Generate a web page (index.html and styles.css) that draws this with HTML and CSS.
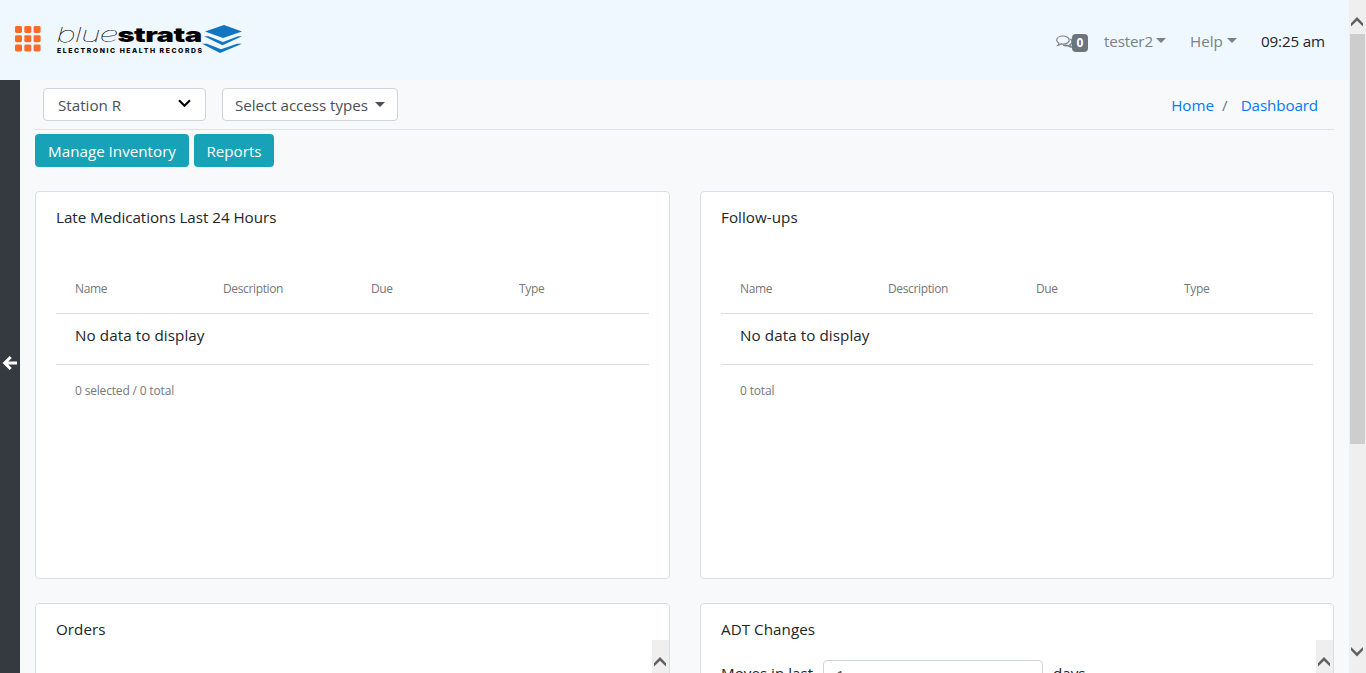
FILE: index.html
```
<!DOCTYPE html>
<html lang="en">
<head>
<meta charset="utf-8">
<title>Dashboard</title>
<link rel="stylesheet" href="styles.css">
</head>
<body>
<div class="app">
  <div class="page">
    <header class="navbar">
      <svg class="apps" width="27" height="27" viewBox="0 0 27 27" fill="#ff6b26">
        <rect x="0" y="0" width="7" height="7" rx="1.4"/><rect x="9.3" y="0" width="7" height="7" rx="1.4"/><rect x="18.6" y="0" width="7" height="7" rx="1.4"/>
        <rect x="0" y="9.2" width="7" height="7" rx="1.4"/><rect x="9.3" y="9.2" width="7" height="7" rx="1.4"/><rect x="18.6" y="9.2" width="7" height="7" rx="1.4"/>
        <rect x="0" y="18.4" width="7" height="7" rx="1.4"/><rect x="9.3" y="18.4" width="7" height="7" rx="1.4"/><rect x="18.6" y="18.4" width="7" height="7" rx="1.4"/>
      </svg>
      <svg class="logo" width="190" height="34" viewBox="0 0 190 34">
        <text class="logo-blue" x="0" y="20" textLength="61" lengthAdjust="spacingAndGlyphs">blue</text>
        <text class="logo-strata" x="61.500" y="20" textLength="84" lengthAdjust="spacingAndGlyphs">strata</text>
        <text class="logo-sub" x="1" y="30.800" textLength="145">ELECTRONIC HEALTH RECORDS</text>
        <g fill="#1176bf">
          <path d="M168 3 186 9.500 167 16 149 9.500Z"/>
          <path d="M148 14.300 152.500 14.300 167 20 182 14.300 186 14.300 166.500 23.300Z"/>
          <path d="M146 21.800 151 21.800 165 27.300 181 21.800 186 21.800 164 31Z"/>
        </g>
      </svg>
      <nav class="nav">
        <span class="messages">
          <svg width="17" height="14" viewBox="0 0 17 14" fill="none" stroke="#7b8188" stroke-width="1.2">
            <path d="M7 1C3.500 1 .7 2.700.7 5c0 1.400.9 2.500 2.300 3.200-.1.900-.6 1.600-1.200 2.200 1.400-.2 2.500-.7 3.300-1.500.6.1 1.200.2 1.900.2 3.500 0 6.200-1.800 6.200-4.100S10.500 1 7 1Z"/>
            <path stroke-width="1.600" d="M14.400 3.800c2.400 1.800 2.200 4.600-.4 6 .2.900.7 1.500 1.400 2.200-1.500-.1-2.700-.7-3.600-1.500-1.600.3-3.300.1-4.500-.5"/>
          </svg>
          <span class="badge">0</span>
        </span>
        <span class="link user">tester2<i class="caret"></i></span>
        <span class="link help">Help<i class="caret"></i></span>
        <span class="clock">09:25 am</span>
      </nav>
    </header>
    <div class="body">
      <aside class="sidebar">
        <svg width="16" height="16" viewBox="0 0 16 16" fill="none" stroke="#fff" stroke-width="3"><path d="M8.700 2 2.700 8 8.700 14M3.500 8H15"/></svg>
      </aside>
      <main class="content">
        <div class="toolbar">
          <div class="select station"><span>Station R</span>
            <svg width="13" height="9" viewBox="0 0 13 9" fill="none" stroke="#000" stroke-width="2.200"><path d="M1 1.300 6.500 6.800 12 1.300"/></svg>
          </div>
          <div class="select access"><span>Select access types</span><i class="caret"></i></div>
          <div class="crumbs"><a>Home</a><span class="slash">/</span><a class="current">Dashboard</a></div>
        </div>
        <div class="actions"><button class="btn manage">Manage Inventory</button><button class="btn reports">Reports</button></div>
        <div class="cards">
          <section class="card">
            <h2 class="late">Late Medications Last 24 Hours</h2>
            <div class="thead"><span>Name</span><span>Description</span><span>Due</span><span>Type</span></div>
            <div class="empty">No data to display</div>
            <div class="foot">0 selected / 0 total</div>
          </section>
          <section class="card">
            <h2>Follow-ups</h2>
            <div class="thead"><span>Name</span><span>Description</span><span>Due</span><span>Type</span></div>
            <div class="empty">No data to display</div>
            <div class="foot">0 total</div>
          </section>
          <section class="card">
            <h2>Orders</h2>
            <div class="inner-scroll"><svg width="12" height="10" viewBox="0 0 12 10"><path fill="#606060" d="M0 6.300 6 0 12 6.300V9.600L6 3.800 0 9.600Z"/></svg></div>
          </section>
          <section class="card">
            <h2>ADT Changes</h2>
            <div class="moves"><span class="moves-label">Moves in last</span><div class="days-input">1</div><span>days</span></div>
            <div class="inner-scroll"><svg width="12" height="10" viewBox="0 0 12 10"><path fill="#606060" d="M0 6.300 6 0 12 6.300V9.600L6 3.800 0 9.600Z"/></svg></div>
          </section>
        </div>
      </main>
    </div>
  </div>
  <div class="scrollbar">
    <svg width="12" height="10" viewBox="0 0 12 10"><path fill="#606060" d="M0 6.300 6 0 12 6.300V9.600L6 3.800 0 9.600Z"/></svg>
    <div class="thumb"></div>
    <svg class="down" width="12" height="10" viewBox="0 0 12 10"><path fill="#606060" d="M0 3.300 6 9.600 12 3.300V0L6 5.800 0 0Z"/></svg>
  </div>
</div>
</body>
</html>
```
FILE: styles.css
```
* { box-sizing: border-box; }
body { margin: 0; height: 673px; overflow: hidden; font: 15.2px/24px "Open Sans", "Noto Sans", sans-serif; color: #212529; background: #f8f9fb; }
.app { display: flex; height: 673px; overflow: hidden; }
.page { width: 1349px; display: flex; flex-direction: column; overflow: hidden; }
.navbar { flex: none; height: 80px; background: #eff7ff; display: flex; align-items: flex-start; padding: 0 24px 0 15px; }
.apps { margin-top: 26px; }
.logo { margin: 22px 0 0 14px; overflow: visible; }
.logo-blue { font: italic 100 20.500px Inter, sans-serif; letter-spacing: -.8px; }
.logo-strata { font: 900 20px Inter, sans-serif; letter-spacing: -.4px; }
.logo-sub { font: 800 6.800px Inter, sans-serif; }
.nav { margin-left: auto; display: flex; padding-top: 29px; white-space: nowrap; }
.messages { display: flex; margin-right: 16px; width: 32px; }
.messages svg { margin-top: 6px; flex: none; }
.badge { width: 16px; height: 18px; margin: 5px 0 0 -1px; border-radius: 4px; background: #6c757d; color: #fff; font-weight: 700; font-size: 12px; line-height: 17px; text-align: center; z-index: 1; }
.link { color: #7b8188; display: flex; }
.user { width: 62px; margin-right: 24px; letter-spacing: -.15px; }
.help { width: 47px; margin-right: 24px; }
.clock { width: 64px; color: #212529; letter-spacing: -.15px; }
.caret { width: 0; height: 0; border: 5px solid transparent; border-top-color: currentColor; border-bottom: 0; margin: 9px 0 0 auto; }
.body { flex: 1; display: flex; min-height: 0; }
.sidebar { width: 20px; flex: none; background: #343a40; padding: 273px 0 0 2px; }
.content { flex: 1; padding: 0 15px; overflow: hidden; }
.toolbar { height: 50px; border-bottom: 1px solid #dee2e6; display: flex; padding: 8px 16px 0 8px; }
.select { height: 33px; background: #fff; border: 1px solid #ced4da; border-radius: 4px; color: #495057; display: flex; padding: 4px 12px 0 12px; white-space: nowrap; }
.station { width: 163px; padding-left: 14px; margin-right: 16px; }
.station svg { margin: 6px 2px 0 auto; }
.access { width: 176px; letter-spacing: -.05px; }
.crumbs { margin-left: auto; display: flex; padding-top: 5px; color: #007bff; }
.current { letter-spacing: -.12px; }
.slash { color: #6c757d; margin: 0 13px 0 8px; }
.actions { display: flex; gap: 5px; padding-top: 4px; height: 61px; }
.btn { border: 0; border-radius: 4px; height: 33px; background: #17a2b8; color: #fff; font: inherit; padding: 0; white-space: nowrap; }
.manage { width: 154px; }
.reports { width: 80px; }
.cards { display: grid; grid-template-columns: 635px 634px; column-gap: 30px; row-gap: 24px; }
.card { position: relative; background: #fff; border: 1px solid #dcdfe2; border-radius: 4px; height: 388px; padding: 13px 20px; overflow: hidden; }
h2 { margin: 0; font: inherit; letter-spacing: .04px; }
.late { letter-spacing: -.04px; }
.thead { margin-top: 35px; height: 50px; display: grid; grid-template-columns: repeat(4, 148px); padding: 13px 0 0 19px; border-bottom: 1px solid #dcdfe2; font-size: 12px; letter-spacing: -.36px; color: #777; }
.empty { height: 51px; border-bottom: 1px solid #dcdfe2; padding: 9px 19px; letter-spacing: .08px; }
.foot { padding: 14px 19px; font-size: 12px; letter-spacing: -.17px; color: #777; }
.inner-scroll { position: absolute; right: 0; top: 36px; width: 17px; height: 352px; background: #efefef; padding-left: 2px; }
.inner-scroll svg { display: block; margin-top: 17px; }
.moves { display: flex; margin-top: 19px; }
.moves span { padding-top: 1px; white-space: nowrap; }
.moves-label { width: 102px; }
.days-input { width: 220px; height: 38px; border: 1px solid #ced4da; border-radius: 4px; padding: 4px 12px; line-height: 21px; margin-right: 10px; color: #495057; }
.scrollbar { width: 17px; background: #efefef; padding: 17px 1px 0; display: flex; flex-direction: column; }
.scrollbar svg { margin-left: 1px; flex: none; }
.thumb { margin-top: 7px; height: 410px; background: #cdcdcd; }
.down { margin-top: 203px; }
```
